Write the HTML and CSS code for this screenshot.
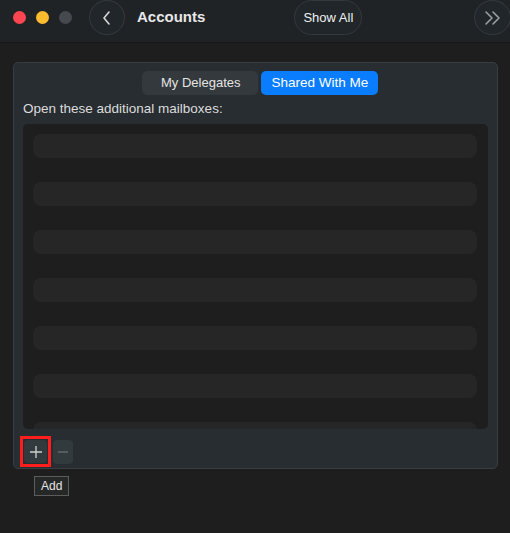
FILE: index.html
```html
<!DOCTYPE html>
<html>
<head>
<meta charset="utf-8">
<link rel="stylesheet" href="styles.css">
</head>
<body>
<header class="toolbar">
  <div class="lights">
    <span class="light red"></span>
    <span class="light yellow"></span>
    <span class="light gray"></span>
  </div>
  <button class="circle-btn back">
    <svg width="12" height="16" viewBox="0 0 12 16"><path d="M8 2 L3 8 L8 14" fill="none" stroke="#d8d8d8" stroke-width="1.6" stroke-linecap="round" stroke-linejoin="round"/></svg>
  </button>
  <h1 class="title">Accounts</h1>
  <button class="pill">Show All</button>
  <span class="spacer"></span>
  <button class="circle-btn more">
    <svg width="20" height="16" viewBox="0 0 20 16"><path d="M3 2 L9 8 L3 14 M10 2 L16 8 L10 14" fill="none" stroke="#9a9fa3" stroke-width="1.6" stroke-linecap="round" stroke-linejoin="round"/></svg>
  </button>
</header>

<main class="panel">
  <div class="seg-row">
    <div class="segmented">
      <span class="seg">My Delegates</span>
      <span class="seg active">Shared With Me</span>
    </div>
  </div>
  <p class="label">Open these additional mailboxes:</p>
  <div class="list">
    <div class="row"></div>
    <div class="row"></div>
    <div class="row"></div>
    <div class="row"></div>
    <div class="row"></div>
    <div class="row"></div>
    <div class="row"></div>
  </div>
  <div class="controls">
    <span class="highlight">
      <button class="ctl add">
        <svg width="14" height="14" viewBox="0 0 14 14"><path d="M7 1 V13 M1 7 H13" stroke="#d0d0d0" stroke-width="1.3"/></svg>
      </button>
    </span>
    <button class="ctl remove">
      <svg width="14" height="14" viewBox="0 0 14 14"><path d="M2 7 H12" stroke="#6a6f72" stroke-width="1.3"/></svg>
    </button>
    <span class="tooltip">Add</span>
  </div>
</main>
</body>
</html>
```

FILE: styles.css
```css
* { box-sizing: border-box; }
html, body {
  margin: 0;
  padding: 0;
  background: #1e1e1e;
  width: 510px;
  height: 533px;
  overflow: hidden;
  font-family: "Liberation Sans", Arial, sans-serif;
  color: #e6e6e6;
}
button {
  font-family: inherit;
  padding: 0;
  margin: 0;
  cursor: default;
}

.toolbar {
  height: 43px;
  background: #202326;
  border-bottom: 1px solid #161718;
  display: flex;
  align-items: flex-start;
  padding-left: 13px;
}
.lights {
  display: flex;
  gap: 10px;
  margin-top: 11px;
}
.light {
  width: 13px;
  height: 13px;
  border-radius: 50%;
  display: block;
}
.light.red { background: #fe4552; }
.light.yellow { background: #fdbb2f; }
.light.gray { background: #46494d; }

.circle-btn {
  width: 36px;
  height: 35px;
  border-radius: 50%;
  border: 1px solid #33393d;
  background: #202629;
  display: flex;
  align-items: center;
  justify-content: center;
}
.back { margin-left: 17px; }
.title {
  margin: 0 0 0 12px;
  font-size: 15px;
  font-weight: bold;
  line-height: 34px;
  color: #e8e8e8;
}
.pill {
  margin-left: 89px;
  height: 35px;
  width: 68px;
  border-radius: 18px;
  border: 1px solid #33393d;
  background: #202629;
  color: #f0f0f0;
  font-size: 13px;
}
.spacer { flex: 1; }
.more { margin-right: -1px; width: 37px; }

.panel {
  margin: 19px 12px 0 13px;
  height: 407px;
  background: #272d30;
  border: 1px solid #383d40;
  border-radius: 5px;
  padding: 8px 9px 0 9px;
  display: flex;
  flex-direction: column;
}
.seg-row {
  display: flex;
  padding-left: 119px;
}
.segmented {
  display: flex;
  gap: 3px;
  background: #272d30;
}
.seg {
  height: 24px;
  line-height: 24px;
  font-size: 13px;
  padding: 0 18px 0 19px;
  border-radius: 5px;
  background: #33393c;
  color: #e4e4e4;
}
.seg.active {
  background: #0a7cfe;
  color: #ffffff;
  font-size: 13.5px;
  padding: 0 10px;
}
.label {
  margin: 6px 0 0 0;
  font-size: 13.5px;
  line-height: 16px;
  color: #dcdcdc;
}
.list {
  margin-top: 7px;
  height: 305px;
  background: #1e1e1e;
  border-radius: 5px;
  padding: 10px 11px 0 10px;
  display: flex;
  flex-direction: column;
  gap: 24px;
  overflow: hidden;
}
.row {
  flex: 0 0 24px;
  height: 24px;
  background: #262626;
  border-radius: 8px;
}

.controls {
  position: relative;
  display: flex;
  align-items: center;
  margin-top: 7px;
  margin-left: -3px;
  gap: 2px;
}
.highlight {
  display: flex;
  border: 3px solid #fe1d1d;
  padding: 1px;
  width: 31px;
  height: 31px;
}
.ctl {
  width: 21px;
  height: 23px;
  border: none;
  border-radius: 4px;
  background: #323a3d;
  display: flex;
  align-items: center;
  justify-content: center;
}
.ctl.add { width: 23px; height: 23px; }
.remove { width: 20px; height: 24px; }
.tooltip {
  position: absolute;
  left: 14px;
  top: 40px;
  height: 20px;
  padding: 0 6px;
  line-height: 18px;
  font-size: 12px;
  background: #262727;
  border: 1px solid #5a5c5e;
  color: #e6e6e6;
}
```
